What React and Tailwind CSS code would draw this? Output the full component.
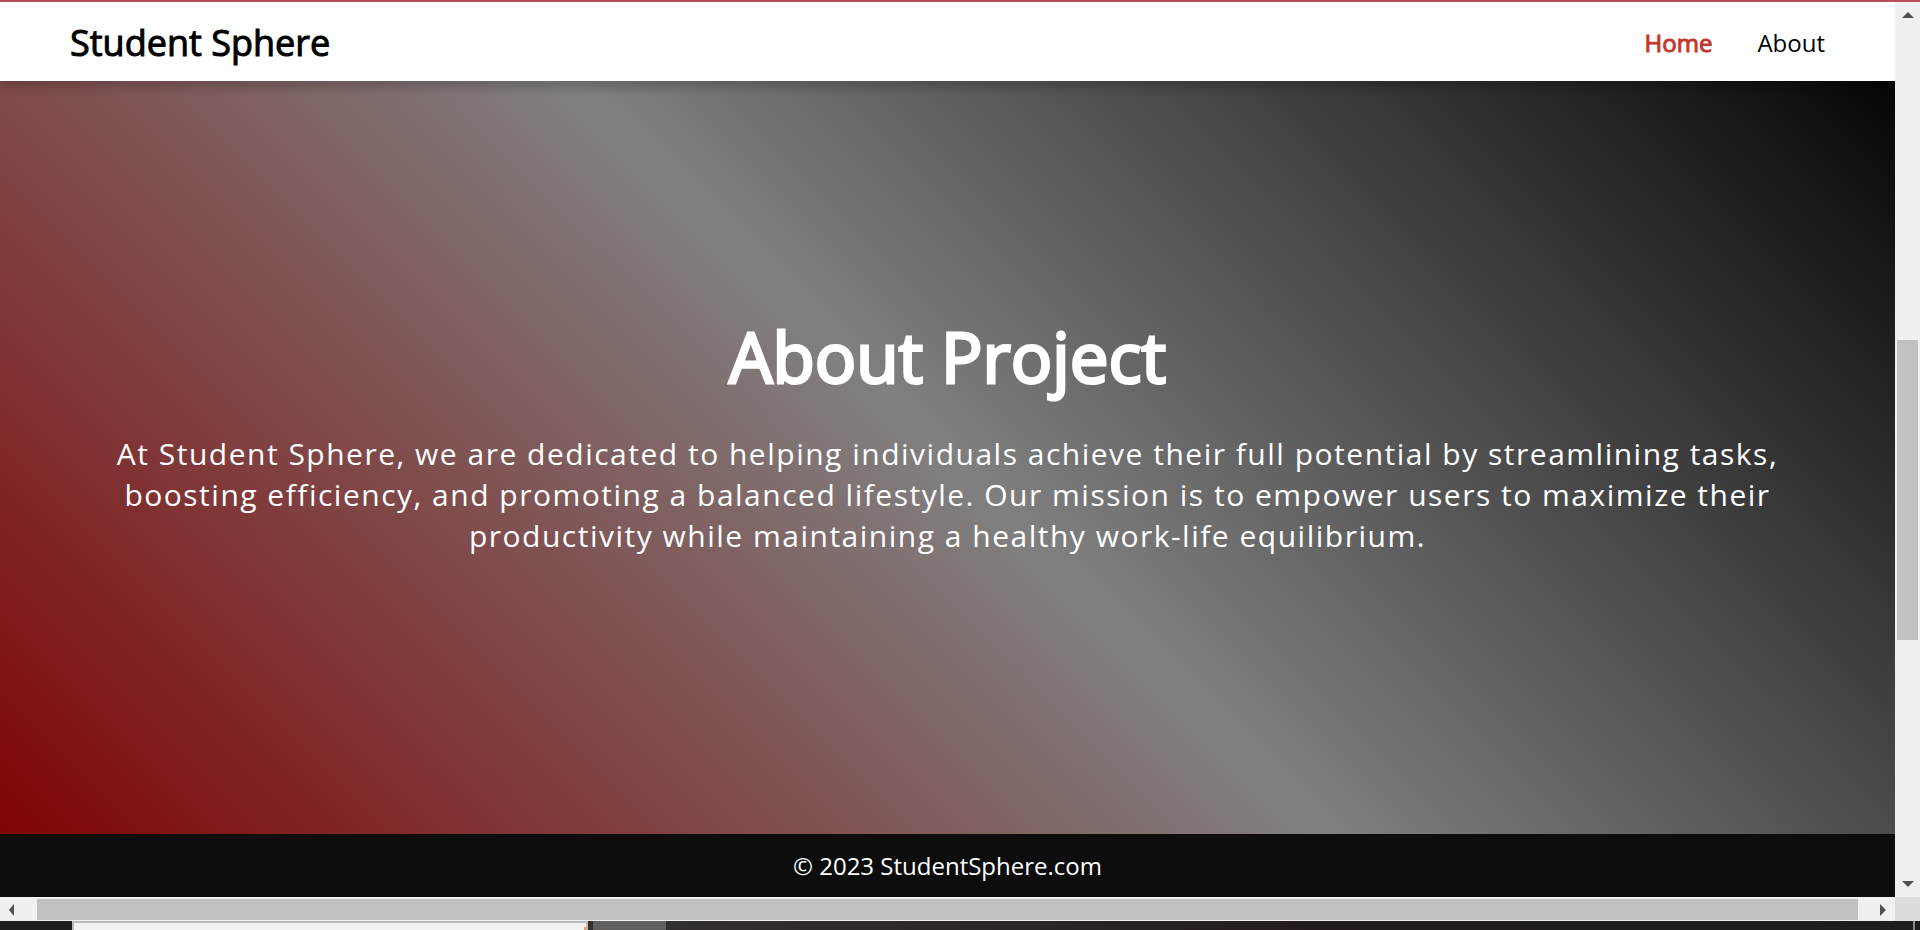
function Arrow({ points }) {
  return (
    <svg viewBox="0 0 12 12" className="h-3 w-3 fill-[#505050]" aria-hidden="true">
      <polygon points={points} />
    </svg>
  );
}

function Header() {
  return (
    <header className="relative flex items-center justify-between bg-white px-[70px] pt-[13px] pb-[11px] shadow-[0_8px_8px_rgba(0,0,0,0.16)]">
      <a href="#top" className="text-[36px] leading-[55px] text-black [-webkit-text-stroke:1px]">
        Student Sphere
      </a>
      <nav className="flex gap-[45px] text-[24px] leading-9">
        <a href="#home" className="text-[#c0392b] [-webkit-text-stroke:1px]">Home</a>
        <a href="#about" className="text-black">About</a>
      </nav>
    </header>
  );
}

function VerticalScrollbar() {
  return (
    <div className="flex w-[25px] shrink-0 flex-col bg-[#f0f0f0]">
      <button type="button" aria-label="Scroll up" className="flex h-[26px] items-center justify-center">
        <Arrow points="0,9 6,3 12,9" />
      </button>
      <div className="flex flex-1 flex-col px-[2px]">
        <div className="grow-[312]" />
        <div className="grow-[300] bg-[#c1c1c1]" />
        <div className="grow-[231]" />
      </div>
      <button type="button" aria-label="Scroll down" className="flex h-[26px] items-center justify-center">
        <Arrow points="0,3 12,3 6,9" />
      </button>
    </div>
  );
}

function HorizontalScrollbar() {
  return (
    <div className="flex h-6 shrink-0 bg-[#f0f0f0]">
      <button type="button" aria-label="Scroll left" className="flex w-6 items-center justify-center pt-[2px]">
        <Arrow points="8,0 8,12 3,6" />
      </button>
      <div className="flex-1 px-[13px] pt-[2px] pb-px">
        <div className="h-full bg-[#c1c1c1]" />
      </div>
      <button type="button" aria-label="Scroll right" className="flex w-6 items-center justify-center pt-[2px]">
        <Arrow points="3,0 9,6 3,12" />
      </button>
      <div className="w-[25px] bg-[#dcdcdc]" />
    </div>
  );
}

export default function App() {
  return (
    <div className="flex min-h-screen flex-col border-t-2 border-[#b84d58] font-['Open_Sans',sans-serif]">
      <div className="flex flex-1">
        <div className="flex flex-1 flex-col overflow-hidden">
          <Header />
          <main className="flex flex-1 flex-col items-center justify-center gap-[30px] bg-[linear-gradient(45deg,#800404,#808080,#060606)] px-[100px] pb-[50px] text-center text-white">
            <h1 className="text-[69px] leading-[94px] [-webkit-text-stroke:3px]">About Project</h1>
            <p className="text-[30px] leading-[41px] tracking-wider">
              At Student Sphere, we are dedicated to helping individuals achieve their full potential by
              streamlining tasks, boosting efficiency, and promoting a balanced lifestyle. Our mission is to
              empower users to maximize their productivity while maintaining a healthy work-life equilibrium.
            </p>
          </main>
          <footer className="bg-[#0d0d0e] py-[14px] text-center text-[24px] leading-[35px] text-white">
            © 2023 StudentSphere.com
          </footer>
        </div>
        <VerticalScrollbar />
      </div>
      <HorizontalScrollbar />
      <div className="flex h-[9px] shrink-0 bg-[#1e1e1e]">
        <div className="w-[72px]" />
        <div className="flex w-[516px] justify-end border-x-2 border-t-2 border-[#bcbcbc] bg-[#f2f2f2]">
          <div className="mt-1 w-[2px] bg-[#e8a050]" />
        </div>
        <div className="w-[5px] bg-[#34302e]" />
        <div className="w-[73px] bg-[#62605d]" />
        <div className="flex-1 bg-linear-to-r from-[#34302e] via-[#241c1f] to-[#1e1e1e]" />
        <div className="mr-[5px] w-[2px] bg-[#8a8a8a]" />
      </div>
    </div>
  );
}
